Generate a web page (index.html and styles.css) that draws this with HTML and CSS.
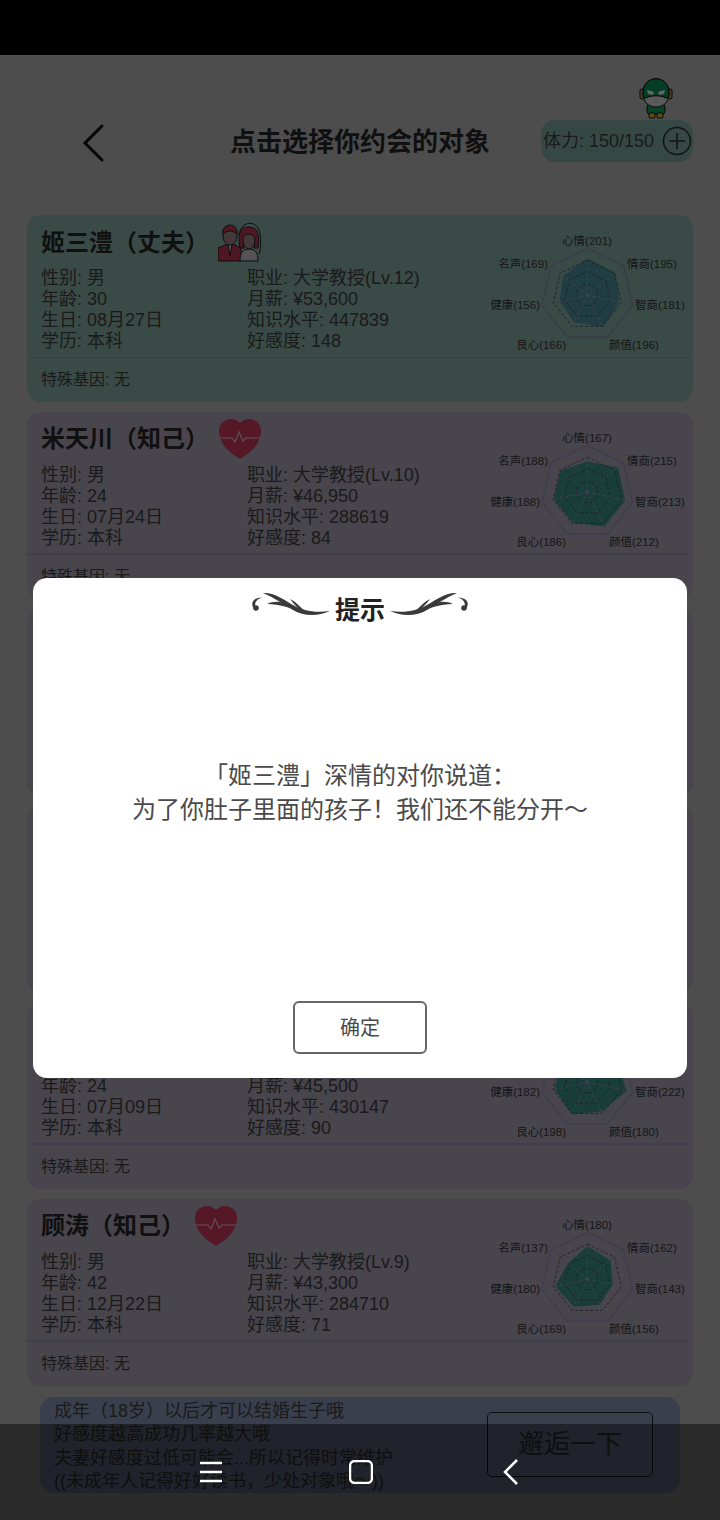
FILE: index.html
```html
<!DOCTYPE html>
<html lang="zh">
<head>
  <meta charset="UTF-8">
  <title>约会</title>
  <link rel="stylesheet" href="styles.css">
</head>
<body>

  <!-- 顶部状态栏 -->
  <div class="status-bar"></div>

  <!-- 标题栏 -->
  <header class="top">
    <div class="top-left">
      <svg class="back" width="22" height="38" viewBox="0 0 22 38"><path d="M20 2 L3 19 L20 36" /></svg>
    </div>
    <h1>点击选择你约会的对象</h1>
    <div class="top-right">
      <div class="stamina">
        <svg class="hero" width="34" height="42" viewBox="0 0 34 42">
          <rect x="1" y="12" width="6" height="10" rx="2" fill="#c8a860" stroke="#111" />
          <rect x="27" y="12" width="6" height="10" rx="2" fill="#c8a860" stroke="#111" />
          <rect x="8" y="27" width="18" height="10" rx="3" fill="#14a868" stroke="#111" />
          <rect x="10" y="36" width="6" height="5" rx="1" fill="#e8c040" stroke="#111" />
          <rect x="18" y="36" width="6" height="5" rx="1" fill="#e8c040" stroke="#111" />
          <path d="M4 16 C4 -3 30 -3 30 16 C30 26 24 30 17 30 C10 30 4 26 4 16 Z" fill="#e0e0e0" stroke="#111" />
          <path d="M4 16 C4 -3 30 -3 30 16 C30 20 29 21 27 21 C22 18 12 18 7 21 C5 21 4 20 4 16 Z" fill="#0f9a60" stroke="#111" />
          <path d="M8 13 L15 15 L14 18 L9 17 Z M26 13 L19 15 L20 18 L25 17 Z" fill="#fff" />
        </svg>
        <span>体力: 150/150</span>
        <svg class="plus" width="30" height="30" viewBox="0 0 30 30">
          <circle cx="15" cy="15" r="13.5" />
          <path d="M15 7 V23 M7 15 H23" />
        </svg>
      </div>
    </div>
  </header>

  <!-- 对象列表 -->
  <div class="liste">

    <section class="card card-mari">
      <div class="card-main">
        <div class="card-text">
          <div class="card-head">
            <h2>姬三澧（丈夫）</h2>
            <svg class="couple" width="44" height="40" viewBox="0 0 44 40">
              <path d="M0 39 V26 L9 22 H15 L23 26 V39 Z" fill="#c23a58" stroke="#222" />
              <path d="M10 22 L12 34 L14 22 Z" fill="#ddd" stroke="#222" />
              <path d="M5 14 C4 3 20 1 19 14 C19 20 15 23 12 23 C9 23 5 20 5 14 Z" fill="#a88a92" stroke="#222" />
              <path d="M5 12 C3 1 20 -1 19 12 C14 8 10 8 5 12 Z" fill="#c23a58" stroke="#222" />
              <path d="M22 39 C22 30 25 27 31 27 C37 27 40 30 40 39 Z" fill="#d0d0d0" stroke="#222" />
              <path d="M22 26 C19 9 24 5 31 5 C38 5 42 9 40 26 L36 26 C38 18 36 13 31 13 C26 13 24 18 26 26 Z" fill="#c23a58" stroke="#222" />
              <path d="M25 18 C25 10 37 10 37 18 C37 24 33 27 31 27 C29 27 25 24 25 18 Z" fill="#a88a92" stroke="#222" />
              <path d="M21 13 C23 -2 40 -3 42 12 C43 20 43 26 41 32" fill="none" stroke="#222" />
            </svg>
          </div>
          <div class="infos">
            <div>性别: 男</div><div>职业: 大学教授(Lv.12)</div>
            <div>年龄: 30</div><div>月薪: ¥53,600</div>
            <div>生日: 08月27日</div><div>知识水平: 447839</div>
            <div>学历: 本科</div><div>好感度: 148</div>
          </div>
        </div>
        <svg class="radar" width="210" height="130" data-values="201,195,181,196,166,156,169"></svg>
      </div>
      <div class="card-foot">特殊基因: 无</div>
    </section>

    <section class="card">
      <div class="card-main">
        <div class="card-text">
          <div class="card-head">
            <h2>米天川（知己）</h2>
            <svg class="heart" width="44" height="42" viewBox="0 0 44 42">
              <path d="M22 41 C12 35 1 26 1 13 C1 5 7 1 13 1 C17 1 20 3 22 5 C24 3 27 1 31 1 C37 1 43 5 43 13 C43 26 32 35 22 41 Z" />
              <polyline points="2,20 14,20 17,24 21,14 25,23 28,20 42,20" />
            </svg>
          </div>
          <div class="infos">
            <div>性别: 男</div><div>职业: 大学教授(Lv.10)</div>
            <div>年龄: 24</div><div>月薪: ¥46,950</div>
            <div>生日: 07月24日</div><div>知识水平: 288619</div>
            <div>学历: 本科</div><div>好感度: 84</div>
          </div>
        </div>
        <svg class="radar" width="210" height="130" data-values="167,215,213,212,186,188,188"></svg>
      </div>
      <div class="card-foot">特殊基因: 无</div>
    </section>

    <!-- 这两张被弹窗挡住 -->
    <section class="card"></section>
    <section class="card"></section>

    <section class="card">
      <div class="card-main">
        <div class="card-text">
          <div class="card-head"></div>
          <div class="infos">
            <div>性别: 男</div><div>职业: 大学教授</div>
            <div>年龄: 24</div><div>月薪: ¥45,500</div>
            <div>生日: 07月09日</div><div>知识水平: 430147</div>
            <div>学历: 本科</div><div>好感度: 90</div>
          </div>
        </div>
        <svg class="radar" width="210" height="130" data-values="200,200,222,180,198,182,180"></svg>
      </div>
      <div class="card-foot">特殊基因: 无</div>
    </section>

    <section class="card">
      <div class="card-main">
        <div class="card-text">
          <div class="card-head">
            <h2>顾涛（知己）</h2>
            <svg class="heart" width="44" height="42" viewBox="0 0 44 42">
              <path d="M22 41 C12 35 1 26 1 13 C1 5 7 1 13 1 C17 1 20 3 22 5 C24 3 27 1 31 1 C37 1 43 5 43 13 C43 26 32 35 22 41 Z" />
              <polyline points="2,20 14,20 17,24 21,14 25,23 28,20 42,20" />
            </svg>
          </div>
          <div class="infos">
            <div>性别: 男</div><div>职业: 大学教授(Lv.9)</div>
            <div>年龄: 42</div><div>月薪: ¥43,300</div>
            <div>生日: 12月22日</div><div>知识水平: 284710</div>
            <div>学历: 本科</div><div>好感度: 71</div>
          </div>
        </div>
        <svg class="radar" width="210" height="130" data-values="180,162,143,156,169,180,137"></svg>
      </div>
      <div class="card-foot">特殊基因: 无</div>
    </section>

  </div>

  <!-- 底部提示 -->
  <div class="note">
    <p>成年（18岁）以后才可以结婚生子哦<br>好感度越高成功几率越大哦<br>夫妻好感度过低可能会...所以记得时常维护<br>((未成年人记得好好读书，少处对象哦～))</p>
    <button class="btn-meet">邂逅一下</button>
  </div>

  <!-- 遮罩和弹窗 -->
  <div class="overlay">
    <div class="modal">
      <div class="modal-title">
        <svg class="orn" width="80" height="30" viewBox="0 0 80 30">
          <path d="M12 2 C22 1 32 8 42 14 C52 20 64 22 79 20 C66 26 52 25 42 19 C32 13 22 6 12 2 Z" />
          <path d="M16 13 C26 8 38 12 50 21 C40 17 28 13 16 13 Z" />
          <path d="M39 8 C45 11 50 16 55 22 C49 19 43 14 39 8 Z" />
          <path d="M3.5 18.5 C-1 13 1 7 11 6.5 C6 8 2.5 12 5 16 Z" />
          <circle cx="5" cy="17" r="2.8" />
        </svg>
        <h3>提示</h3>
        <svg class="orn orn-droite" width="80" height="30" viewBox="0 0 80 30">
          <path d="M12 2 C22 1 32 8 42 14 C52 20 64 22 79 20 C66 26 52 25 42 19 C32 13 22 6 12 2 Z" />
          <path d="M16 13 C26 8 38 12 50 21 C40 17 28 13 16 13 Z" />
          <path d="M39 8 C45 11 50 16 55 22 C49 19 43 14 39 8 Z" />
          <path d="M3.5 18.5 C-1 13 1 7 11 6.5 C6 8 2.5 12 5 16 Z" />
          <circle cx="5" cy="17" r="2.8" />
        </svg>
      </div>
      <p class="modal-msg">「姬三澧」深情的对你说道：<br>为了你肚子里面的孩子！我们还不能分开～</p>
      <div class="modal-foot"><button class="btn-ok">确定</button></div>
    </div>
  </div>

  <!-- 系统导航栏 -->
  <nav class="sys-nav">
    <svg width="22" height="22" viewBox="0 0 22 22"><path d="M0 2 H22 M0 11 H22 M0 20 H22" /></svg>
    <svg width="24" height="24" viewBox="0 0 24 24"><rect x="1" y="1" width="22" height="22" rx="5" /></svg>
    <svg class="nav-back" width="19" height="26" viewBox="0 0 19 26"><path d="M16 1 L4 13 L16 25" /></svg>
  </nav>

  <script src="script.js"></script>
</body>
</html>
```

FILE: styles.css
```css
/* 页面基础 */
body {
  margin: 0;
  height: 1520px;
  overflow: hidden;
  position: relative;
  background-color: #c0c0c0;
  font-family: "Liberation Sans", "Noto Sans CJK SC", sans-serif;
  color: #444;
}

.status-bar {
  height: 55px;
  background-color: #000;
  position: relative;
  z-index: 3;
}

/* 标题栏 */
.top {
  display: grid;
  grid-template-columns: 1fr auto 1fr;
  align-items: center;
  padding: 65px 27px 53px;
  height: 160px;
  box-sizing: border-box;
}

.top-left {
  padding-left: 55px;
  padding-top: 4px;
  display: flex;
}

.back path {
  fill: none;
  stroke: #111;
  stroke-width: 3;
  stroke-linecap: round;
}

.top h1 {
  margin: 0;
  padding-bottom: 4px;
  font-size: 26px;
  font-weight: bold;
  color: #2a2a2a;
}

.top-right {
  display: flex;
  justify-content: flex-end;
}

.stamina {
  position: relative;
  width: 152px;
  height: 42px;
  box-sizing: border-box;
  padding: 0 1px 0 2px;
  display: flex;
  align-items: center;
  justify-content: space-between;
  border-radius: 14px;
  background-color: #86b3a9;
  font-size: 18px;
}

.stamina span {
  padding-bottom: 4px;
}

.hero {
  position: absolute;
  top: -43px;
  left: 98px;
}

.plus circle,
.plus path {
  fill: none;
  stroke: #333;
  stroke-width: 1.6;
}

/* 卡片列表 */
.liste {
  display: flex;
  flex-direction: column;
  gap: 9.75px;
  padding: 0 27px;
}

.card {
  height: 187px;
  border-radius: 14px;
  background-color: #b4acc0;
}

.card-mari {
  background-color: #91b9af;
}

.card-main {
  display: flex;
  height: 143px;
  padding-left: 14px;
  margin: 0 3px 0 0;
  border-bottom: 2px solid #a09dc0;
  box-sizing: border-box;
}

.card-mari .card-main {
  border-bottom: 1px solid #86ada6;
}

.card-text {
  flex: 1;
}

.card-head {
  display: flex;
  align-items: center;
  height: 50px;
  margin-bottom: 3px;
}

.card-head h2 {
  margin: 0 9px 0 0;
  font-size: 24px;
  font-weight: bold;
  color: #2a2a2a;
}

.card-head svg {
  margin-top: 4px;
}

.infos {
  display: grid;
  grid-template-columns: 206px auto;
  font-size: 18px;
  line-height: 21px;
}

.heart path {
  fill: #d83a60;
}

.heart polyline {
  fill: none;
  stroke: #e8d0d8;
  stroke-width: 1.2;
}

.radar {
  flex-shrink: 0;
  margin-top: 10px;
}

.radar text {
  font-size: 11.5px;
  fill: #3a3a3a;
}

.ring {
  fill: none;
  stroke: #444;
  stroke-width: 0.8;
  stroke-dasharray: 3 2;
}

.ring-out {
  stroke: #9a9cc4;
  stroke-width: 1.5;
  stroke-dasharray: none;
}

.card-mari .ring-out {
  stroke: #8f9cb0;
}

.spoke {
  stroke: #a0a0c8;
  stroke-width: 1;
  stroke-dasharray: 3 2;
}

.zone {
  fill: #3f9a90;
}

.card-mari .zone {
  fill: #4f9aa6;
}

.card-foot {
  height: 44px;
  display: flex;
  align-items: center;
  padding: 0 0 4px 14px;
  box-sizing: border-box;
  font-size: 16px;
}

/* 底部提示 */
.note {
  margin: 11px 40px 0;
  height: 96px;
  padding: 0 27px 0 14px;
  box-sizing: border-box;
  display: flex;
  align-items: center;
  justify-content: space-between;
  border-radius: 14px;
  background-color: #919dc0;
  font-size: 18px;
  line-height: 23.4px;
}

.note p {
  margin: 0;
  padding-top: 4px;
}

.btn-meet {
  width: 166px;
  height: 65px;
  background: none;
  border: 1px solid #222;
  border-radius: 5px;
  font: inherit;
  font-size: 26px;
  color: #444;
}

/* 遮罩和弹窗 */
.overlay {
  position: absolute;
  inset: 0;
  z-index: 2;
  background-color: rgba(0, 0, 0, 0.6);
  padding: 578px 33px 0;
}

.modal {
  height: 500px;
  border-radius: 14px;
  background-color: #fff;
  display: flex;
  flex-direction: column;
}

.modal-title {
  height: 56px;
  margin-bottom: 4px;
  display: flex;
  justify-content: center;
  align-items: center;
  gap: 4px;
}

.modal-title h3 {
  margin: 0;
  font-size: 25px;
  font-weight: bold;
  color: #222;
  padding-top: 4px;
}

.orn {
  fill: #3a3a3a;
}

.orn-droite {
  transform: scaleX(-1);
}

.modal-msg {
  flex: 1;
  margin: 0;
  padding-bottom: 54px;
  display: flex;
  flex-direction: column;
  justify-content: center;
  text-align: center;
  font-size: 24px;
  line-height: 34px;
  color: #4a4a4a;
}

.modal-foot {
  display: flex;
  justify-content: center;
  padding-bottom: 24px;
}

.btn-ok {
  width: 134px;
  height: 53px;
  padding-bottom: 3px;
  background: #fff;
  border: 2px solid #666;
  border-radius: 6px;
  font: inherit;
  font-size: 20px;
  color: #4a4a4a;
}

/* 系统导航栏 */
.sys-nav {
  position: absolute;
  left: 0;
  right: 0;
  bottom: 0;
  height: 96px;
  z-index: 3;
  display: flex;
  align-items: center;
  justify-content: center;
  gap: 127px;
  background-color: rgba(0, 0, 0, 0.44);
}

.nav-back {
  margin-left: 1px;
}

.sys-nav path,
.sys-nav rect {
  fill: none;
  stroke: #fff;
  stroke-width: 2.5;
}
```

FILE: script.js
```js
// 雷达图：七个属性，从上方顺时针
var noms = ['心情', '情商', '智商', '颜值', '良心', '健康', '名声'];
var cx = 107.3, cy = 70, rayon = 46.5, maxi = 255;

// 每个标签的位置 [x, y, 对齐]
var places = [
  [107, 20, 'middle'], [147, 43, 'start'], [155, 84, 'start'], [129, 124, 'start'],
  [86, 124, 'end'], [60, 84, 'end'], [68, 43, 'end']
];

function point(i, r) {
  var a = i * 2 * Math.PI / 7;
  return [cx + r * Math.sin(a), cy - r * Math.cos(a)];
}

function contour(r) {
  return noms.map(function(n, i) {
    return point(i, r).map(function(v) { return v.toFixed(1); }).join(',');
  }).join(' ');
}

document.querySelectorAll('.radar').forEach(function(svg) {
  var valeurs = svg.dataset.values.split(',').map(Number);
  var html = '';

  // 先画数据区域，网格压在上面
  var zone = valeurs.map(function(v, i) {
    return point(i, rayon * v / maxi).join(',');
  }).join(' ');
  html += '<polygon class="zone" points="' + zone + '"/>';

  [0.25, 0.5, 0.75].forEach(function(f) {
    html += '<polygon class="ring" points="' + contour(rayon * f) + '"/>';
  });
  html += '<polygon class="ring ring-out" points="' + contour(rayon) + '"/>';

  noms.forEach(function(n, i) {
    var p = point(i, rayon);
    html += '<line class="spoke" x1="' + cx + '" y1="' + cy + '" x2="' + p[0] + '" y2="' + p[1] + '"/>';
    html += '<text x="' + places[i][0] + '" y="' + places[i][1] + '" text-anchor="' + places[i][2] + '">' + n + '(' + valeurs[i] + ')</text>';
  });

  svg.innerHTML = html;
});
```
